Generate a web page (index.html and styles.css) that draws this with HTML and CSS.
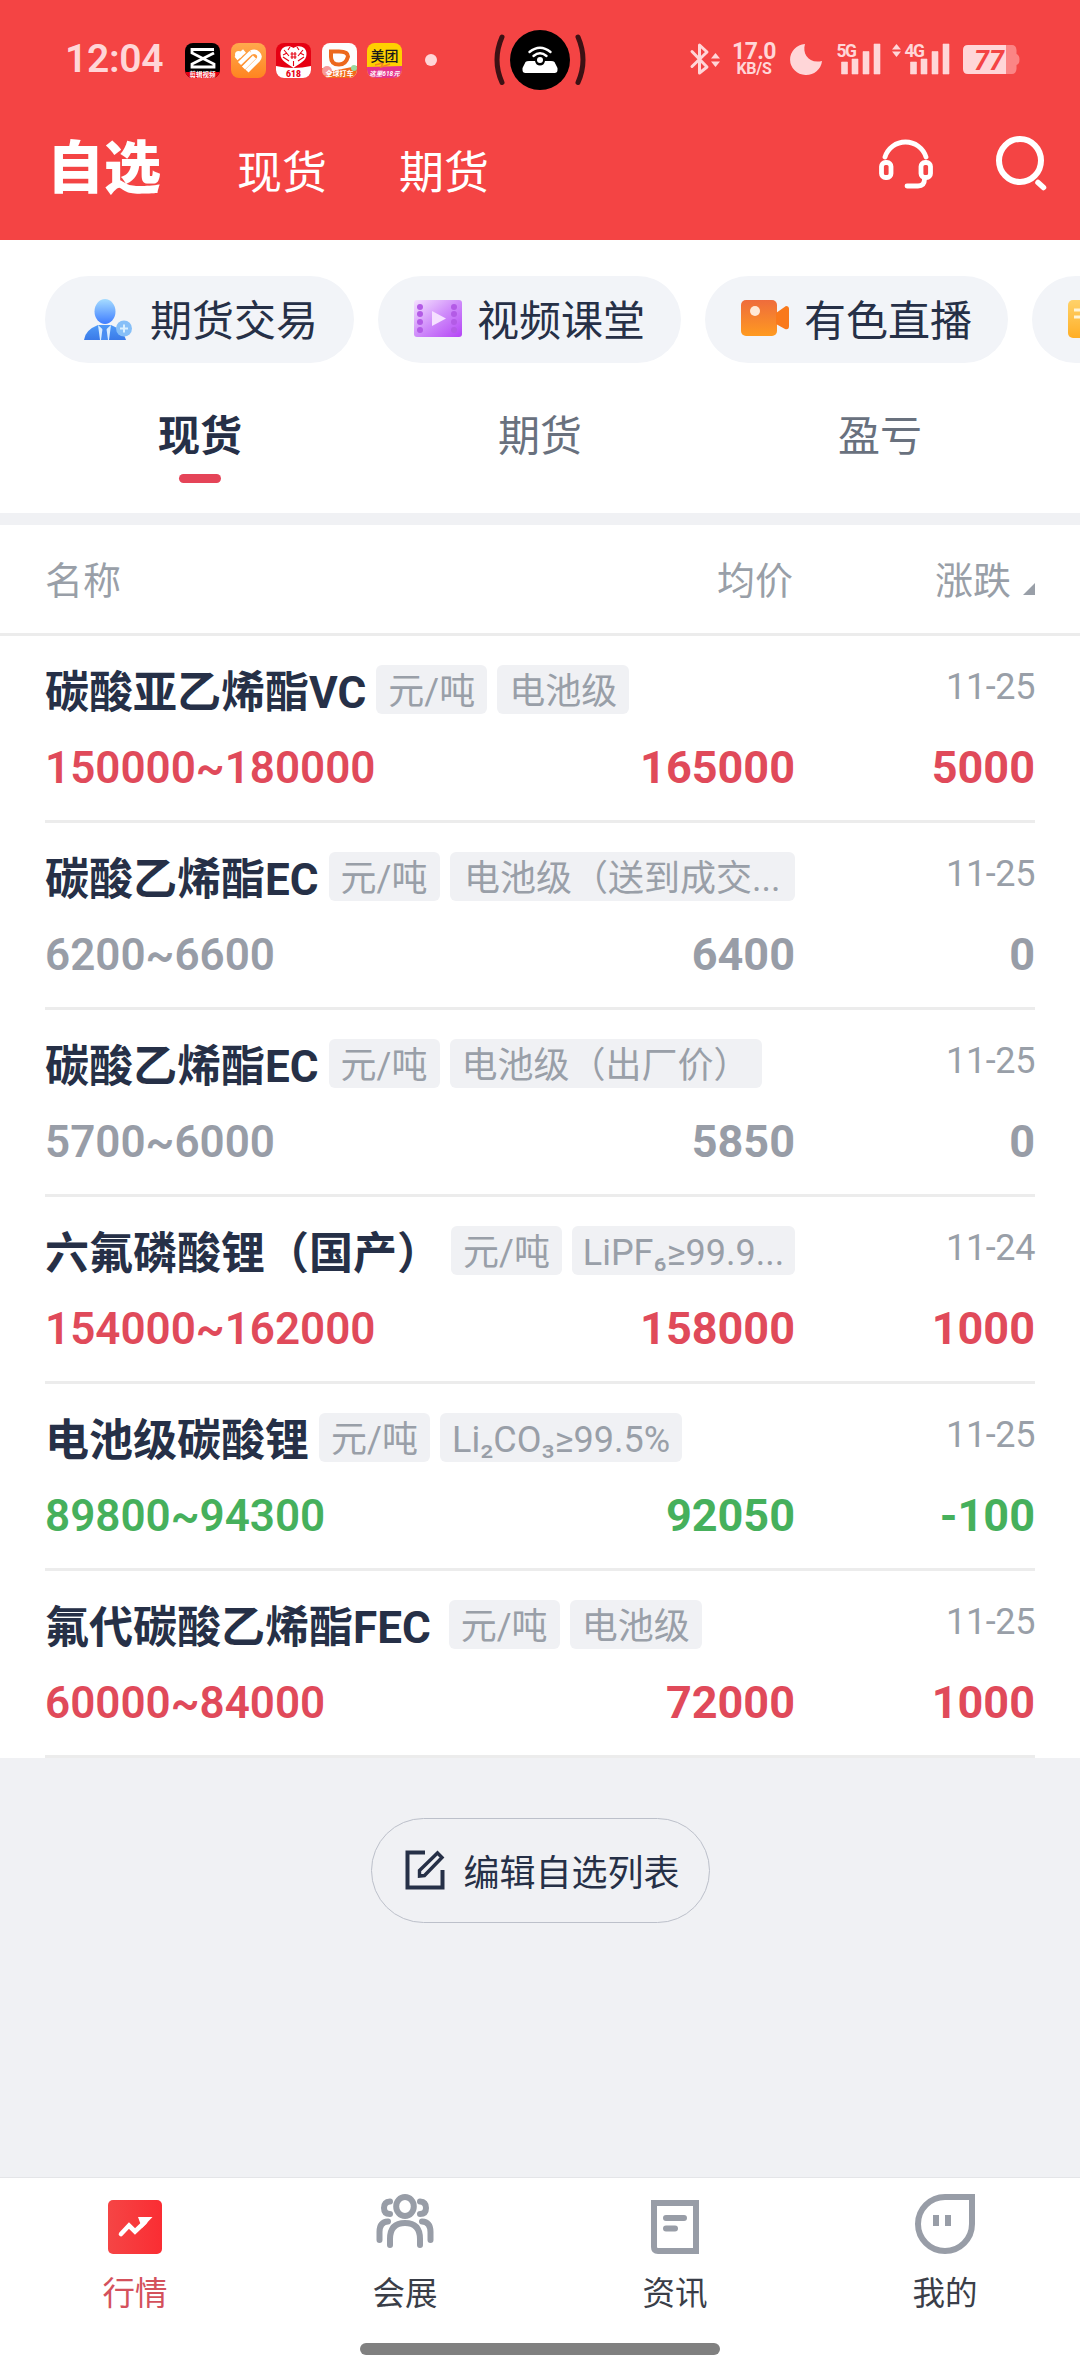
FILE: index.html
```html
<!DOCTYPE html>
<html lang="zh-CN">
<head>
<meta charset="utf-8">
<title>自选</title>
<link rel="stylesheet" href="styles.css">
</head>
<body>
<div class="app">
  <header class="header">
    <div class="status">
      <div class="status-left">
        <span class="clock">12:04</span>
        <svg class="app-icon" viewBox="0 0 35 35"><clipPath id="r"><rect width="35" height="35" rx="8"/></clipPath><g clip-path="url(#r)"><rect width="35" height="35" fill="#000"/><rect y="29" width="35" height="6" fill="#e60012"/><path d="M29 6.500H7V10L29 21V24H7V21L29 10" fill="none" stroke="#fff" stroke-width="2.800"/><text x="17.500" y="34" class="app-tag">剪辑视频</text></g></svg>
        <svg class="app-icon" viewBox="0 0 35 35"><defs><linearGradient id="o" x2="0" y2="1"><stop stop-color="#ffa94d"/><stop offset="1" stop-color="#ff8420"/></linearGradient></defs><rect width="35" height="35" rx="8" fill="url(#o)"/><g fill="none" stroke="#fff" stroke-width="4.400"><path d="M5 15.500L13.500 8M8.500 20.500L20 9.500M12.500 25L23.500 14"/><path d="M20 9.500Q24 7.500 27 10.500T27 17L16 28"/></g><circle cx="7.500" cy="11.500" r="3.500" fill="#fff"/></svg>
        <svg class="app-icon" viewBox="0 0 35 35"><g clip-path="url(#r)"><rect width="35" height="35" fill="#e60012"/><path d="M0 23Q17.500 27 35 23V35H0Z" fill="#fff"/><path d="M17.500 5C12 1 4 4 4.500 11C4.500 18 11 20 17.500 25C24 20 30.500 18 30.500 11C31 4 23 1 17.500 5Z" fill="#fff"/><path d="M8 7l5 6M27 7l-5 6M7 14l6 4M28 14l-6 4M14.500 11h6M14.500 14h6M16 9v7M19 9v7M12 7l2-3M23 7l-2-3M17.500 18v5M11 10l-4 2M24 10l4 2" stroke="#e60012" stroke-width="1.100"/><text x="17.500" y="34" class="app-618">618</text></g></svg>
        <svg class="app-icon" viewBox="0 0 35 35"><g clip-path="url(#r)"><rect width="35" height="35" fill="#fdfdfd"/><path d="M0 25L10 28L35 23V35H0Z" fill="#f26a1b"/><circle cx="5" cy="28" r="5" fill="#f69a9a"/><circle cx="32" cy="25" r="3" fill="#9bd8a0"/><path d="M9 8.500H17Q26 8.500 26 13.500Q24 21.500 17 21.500Q9 21.500 9 14Z" fill="none" stroke="#ec681c" stroke-width="4"/><text x="17.500" y="33" class="app-tag app-tag-big">全球打车</text></g></svg>
        <svg class="app-icon" viewBox="0 0 35 35"><g clip-path="url(#r)"><rect width="35" height="35" fill="#ffd000"/><path d="M0 24L35 23V35H0Z" fill="#e5348b"/><path d="M8 22L16 20L14 24L23 21" stroke="#f58220" fill="none" stroke-width="1.500"/><text x="17.500" y="17.500" class="app-mt">美团</text><text x="17.500" y="32.500" class="app-tag app-tag-mt">这里618元</text></g></svg>
        <span class="more-dot"></span>
      </div>
      <svg class="island" viewBox="490 28 100 64"><circle cx="540" cy="60" r="30" fill="#000"/><g fill="none" stroke="#3c1114" stroke-width="5" stroke-linecap="round"><path d="M502 37Q492 60 502 82.500M578 37Q588 60 578 82.500"/></g><path d="M525.500 62Q526.500 61 529 61H535Q536 65.500 540 65.500T545 61H551Q553.500 61 554.500 62L557.500 68V70Q557.500 73 554.500 73H525.500Q522.500 73 522.500 70V68Z" fill="#fff"/><circle cx="540" cy="60" r="3" fill="#fff"/><g fill="none" stroke="#fff" stroke-width="2.400" stroke-linecap="round"><path d="M529.500 52Q540 43.500 550.500 52M533.500 56Q540 50.500 546.500 56"/></g></svg>
      <div class="status-right">
        <svg width="32" height="34" viewBox="689 43 32 34"><path d="M692 51.500L707 67L699.500 73V45L707 52L692 66.500" fill="none" stroke="#ffd6d8" stroke-width="3" stroke-linejoin="round" stroke-linecap="round"/><path d="M711 58.500L715.500 53L720 58.500ZM711 61.500H720L715.500 67Z" fill="#ffd6d8"/></svg>
        <div class="net-speed"><span class="net-num">17.0</span><span class="net-unit">KB/S</span></div>
        <svg class="moon" width="34" height="34" viewBox="789 43 34 34"><path d="M805 44C802 54 809 64 822 61A16 15.500 0 1 1 805 44Z" fill="#ffd6d8"/></svg>
        <svg class="sig" width="45" height="34" viewBox="836 43 45 34"><text x="836.500" y="56.500" class="sig-label">5G</text><path d="M841.500 62h6v12h-6zM852 59h6v15h-6zM863 51.500h6V74h-6zM874 44h6v30h-6z" class="sig-bars"/></svg>
        <svg class="sig2" width="59" height="34" viewBox="891 43 59 34"><path d="M892 49.500L896.500 44L901 49.500ZM892 51.500H901L896.500 57Z" fill="#ffd6d8"/><text x="904.500" y="56.500" class="sig-label">4G</text><path d="M910.500 62h6v12h-6zM921 59h6v15h-6zM932 51.500h6V74h-6zM943 44h6v30h-6z" class="sig-bars"/></svg>
        <svg class="batt" width="58" height="34" viewBox="962 43 58 34"><path d="M1006 45h6q4 0 4.500 5v4q3 1 3 5.500t-3 5.500v4q-.5 5-4.500 5h-6z" fill="#fb8585"/><path d="M968 45H1006V74H968Q963 74 963 69V50Q963 45 968 45Z" fill="#ffd6d8"/><text x="989" y="69.500" class="batt-num">77</text></svg>
      </div>
    </div>
    <nav class="main-nav">
      <span class="main-title">自选</span>
      <span class="main-item">现货</span>
      <span class="main-item main-item-2">期货</span>
      <svg class="ico-head" width="56" height="56" viewBox="878 136 56 56"><g fill="none" stroke="#fff" stroke-width="4.800" stroke-linecap="round"><path d="M885 157A21.500 21.500 0 0 1 926 157"/><rect x="881.500" y="162.500" width="9.500" height="15" rx="4"/><rect x="921" y="162.500" width="9.500" height="15" rx="4"/><path d="M924.500 179Q924.500 186 918 186H907"/></g></svg>
      <svg class="ico-search" width="54" height="58" viewBox="994 134 54 58"><g fill="none" stroke="#fff" stroke-linecap="round"><ellipse cx="1020" cy="160.500" rx="21" ry="21.500" stroke-width="6"/><path d="M1038 182.500L1043.500 187.500" stroke-width="5.500"/></g></svg>
    </nav>
  </header>

  <section class="chips">
    <div class="chip"><svg width="54" height="48" viewBox="81 297 54 48"><defs><linearGradient id="b" x2="0" y2="1"><stop stop-color="#a6dcff"/><stop offset="1" stop-color="#3f7dff"/></linearGradient><linearGradient id="b2" x2="0" y2="1"><stop stop-color="#4f9af8"/><stop offset="1" stop-color="#3a7ae8"/></linearGradient></defs><path d="M84 341Q85 331 98 326H111Q124 331 126 341Z" fill="url(#b2)"/><path d="M98 326L104.500 332L111 326L109 341H100Z" fill="#d7ecff"/><path d="M102.500 330h4l1.500 11h-7z" fill="#4a8ef2"/><ellipse cx="105" cy="312.500" rx="10.500" ry="12.500" fill="url(#b)"/><circle cx="124" cy="329.500" r="8" fill="#86bff8"/><path d="M120 329.500h8M124 325.500v8" stroke="#d9efff" stroke-width="2"/></svg><span>期货交易</span></div>
    <div class="chip"><svg width="48" height="48" viewBox="414 297 48 48"><defs><linearGradient id="p" x2="1" y2="1"><stop stop-color="#f5e2ff"/><stop offset=".5" stop-color="#cf8cfa"/><stop offset="1" stop-color="#b444f5"/></linearGradient></defs><rect x="414" y="301" width="48" height="37" rx="3" fill="url(#p)"/><g fill="#b35be6"><circle cx="420" cy="308" r="3"/><circle cx="420" cy="315" r="3"/><circle cx="420" cy="323" r="3"/><circle cx="420" cy="331" r="3"/><circle cx="454" cy="308" r="3"/><circle cx="454" cy="315" r="3"/><circle cx="454" cy="323" r="3"/><circle cx="454" cy="331" r="3"/></g><path d="M432 312L446 319.500L432 327Z" fill="#f5e0ff"/></svg><span>视频课堂</span></div>
    <div class="chip"><svg width="48" height="48" viewBox="741 297 48 48"><defs><linearGradient id="c" x2="0" y2="1"><stop stop-color="#ee6c3c"/><stop offset="1" stop-color="#ff9a20"/></linearGradient></defs><rect x="741" y="301" width="36" height="36" rx="5" fill="url(#c)"/><path d="M776 314L786 307Q789 307 789 310V327Q789 331 785 330L776 325Z" fill="#f9791c"/><circle cx="755" cy="312" r="5" fill="#ffe9d6"/></svg><span>有色直播</span></div>
    <div class="chip"><svg width="48" height="48" viewBox="1068 297 48 48"><defs><linearGradient id="d" x2="0" y2="1"><stop stop-color="#ffd26a"/><stop offset="1" stop-color="#ffae26"/></linearGradient></defs><rect x="1068" y="301" width="40" height="38" rx="5" fill="url(#d)"/><path d="M1074 311h24M1074 318h24" stroke="#fff4d6" stroke-width="3"/></svg></div>
  </section>

  <section class="tabs">
    <div class="tab tab-on"><span>现货</span></div><div class="tab"><span>期货</span></div><div class="tab"><span>盈亏</span></div>
  </section>

  <section class="thead"><span class="col-name">名称</span><span class="col-avg">均价</span><span class="col-chg">涨跌</span><i class="sort"></i></section>

  <main class="list">
    <article class="row up"><div class="line1"><div class="what"><h3>碳酸亚乙烯酯VC</h3><span class="tag unit">元/吨</span><span class="tag">电池级</span></div><time>11-25</time></div><div class="line2"><span class="range">150000~180000</span><span class="avg">165000</span><span class="chg">5000</span></div></article>
    <article class="row flat"><div class="line1"><div class="what"><h3>碳酸乙烯酯EC</h3><span class="tag unit">元/吨</span><span class="tag cut">电池级（送到成交...</span></div><time>11-25</time></div><div class="line2"><span class="range">6200~6600</span><span class="avg">6400</span><span class="chg">0</span></div></article>
    <article class="row flat"><div class="line1"><div class="what"><h3>碳酸乙烯酯EC</h3><span class="tag unit">元/吨</span><span class="tag">电池级（出厂价）</span></div><time>11-25</time></div><div class="line2"><span class="range">5700~6000</span><span class="avg">5850</span><span class="chg">0</span></div></article>
    <article class="row up"><div class="line1"><div class="what"><h3>六氟磷酸锂（国产）</h3><span class="tag unit">元/吨</span><span class="tag cut">LiPF₆≥99.9...</span></div><time>11-24</time></div><div class="line2"><span class="range">154000~162000</span><span class="avg">158000</span><span class="chg">1000</span></div></article>
    <article class="row down"><div class="line1"><div class="what"><h3>电池级碳酸锂</h3><span class="tag unit">元/吨</span><span class="tag">Li₂CO₃≥99.5%</span></div><time>11-25</time></div><div class="line2"><span class="range">89800~94300</span><span class="avg">92050</span><span class="chg">-100</span></div></article>
    <article class="row up"><div class="line1"><div class="what"><h3 class="wide">氟代碳酸乙烯酯FEC</h3><span class="tag unit">元/吨</span><span class="tag">电池级</span></div><time>11-25</time></div><div class="line2"><span class="range">60000~84000</span><span class="avg">72000</span><span class="chg">1000</span></div></article>
  </main>

  <section class="tail">
    <button class="edit"><svg width="40" height="40" viewBox="404 1850 40 40"><g fill="none" stroke="#263047" stroke-width="4"><path d="M424 1852.500H406.500V1887.500H441.500V1870"/><path d="M418.500 1876V1870.500L436.500 1853L441 1857.500L423.500 1875.500Z" stroke-width="3.400"/></g></svg><span>编辑自选列表</span></button>
  </section>

  <footer class="tabbar">
    <div class="tb-row">
      <div class="tb on"><svg width="60" height="60" viewBox="105 2194 60 60"><defs><linearGradient id="n" x2="1"><stop stop-color="#f54545"/><stop offset="1" stop-color="#fa2d33"/></linearGradient></defs><rect x="108" y="2200" width="54" height="54" rx="5" fill="url(#n)"/><path d="M121 2234L129 2225.500L135 2231.500L145 2222" fill="none" stroke="#fff" stroke-width="4.600" stroke-linecap="round"/><path d="M138 2217H152.500L142 2228Z" fill="#fff"/></svg><span>行情</span></div>
      <div class="tb"><svg width="60" height="60" viewBox="375 2194 60 60"><g fill="none" stroke="#989da7" stroke-width="6" stroke-linecap="round"><ellipse cx="405" cy="2206.500" rx="8.800" ry="9.500"/><path d="M390 2245V2239Q390 2223 405 2223T420 2239V2245M390 2201.500Q384 2202 384 2208T390 2214M420 2201.500Q426 2202 426 2208T420 2214M388 2221.500Q379.500 2222 379.500 2232V2240M422 2221.500Q430.500 2222 430.500 2232V2240"/></g></svg><span>会展</span></div>
      <div class="tb"><svg width="60" height="60" viewBox="645 2194 60 60"><path d="M654 2203H696V2251H658Q654 2251 654 2247Z" fill="none" stroke="#989da7" stroke-width="6"/><path d="M666 2218H684M666 2228.500H675" stroke="#989da7" stroke-width="6" stroke-linecap="round"/></svg><span>资讯</span></div>
      <div class="tb"><svg width="60" height="60" viewBox="915 2194 60 60"><path d="M945 2197H972V2224A27 27 0 1 1 945 2197Z" fill="none" stroke="#989da7" stroke-width="6"/><path d="M933 2215h6v11h-6zM945 2215h6v11h-6z" fill="#989da7"/></svg><span>我的</span></div>
    </div>
    <div class="home"></div>
  </footer>
</div>
</body>
</html>
```

FILE: styles.css
```css
* { box-sizing: border-box; }
body { margin: 0; font-family: Roboto, "Noto Sans CJK SC", sans-serif; color: #263047; background: #f0f1f4; }
svg { display: block; flex: none; overflow: visible; }
.app { width: 1080px; height: 2376px; display: flex; flex-direction: column; overflow: hidden; }

.header { height: 240px; background: #f44444; flex: none; }
.status { height: 120px; display: grid; grid-template-columns: 490px 100px 490px; align-items: center; }
.status-left { display: flex; align-items: center; padding-left: 65px; }
.clock { width: 120px; font-size: 39px; font-weight: 600; color: #ffd6d8; letter-spacing: -.3px; line-height: 40px; margin-top: -2px; }
.app-icon { width: 35px; height: 35px; margin-right: 10.500px; }
.app-tag { font-size: 6.500px; fill: #fff; font-weight: 700; text-anchor: middle; }
.app-tag-big { font-size: 7px; }
.app-tag-mt { font-size: 6.500px; font-style: italic; }
.app-618 { font-size: 8.500px; fill: #e60012; font-weight: 900; text-anchor: middle; }
.app-mt { font-size: 14px; fill: #1a1a1a; font-weight: 500; text-anchor: middle; }
.more-dot { width: 12px; height: 12px; border-radius: 50%; background: #ffd6d8; margin-left: 12px; }
.island { width: 100px; height: 64px; }
.status-right { display: flex; align-items: center; padding-left: 99px; color: #ffd6d8; }
.net-speed { width: 48px; margin-left: 9px; text-align: center; display: flex; flex-direction: column; font-weight: 700; white-space: nowrap; }
.net-num { font-size: 23px; line-height: 18px; letter-spacing: -.6px; }
.net-unit { font-size: 16px; line-height: 16px; font-weight: 700; letter-spacing: -.3px; }
.moon { margin-left: 11px; }
.sig { margin-left: 13px; }
.sig2 { margin-left: 10px; }
.batt { margin-left: 12px; }
.sig-label { font-size: 17.500px; font-weight: 700; fill: #ffd6d8; letter-spacing: -1.500px; }
.sig-bars { fill: #ffd6d8; stroke: #ffd6d8; stroke-width: .6; }
.batt-num { font-size: 27px; font-weight: 700; font-style: italic; fill: #f44444; text-anchor: middle; }

.main-nav { height: 120px; display: flex; align-items: center; padding-left: 47px; color: #fff; }
.main-title { width: 190px; font-size: 57px; font-weight: 900; line-height: 60px; margin-top: -23px; }
.main-item { width: 162px; font-size: 45px; line-height: 60px; margin-top: -12px; }
.main-item-2 { width: 479px; }
.ico-head { margin-top: -32px; }
.ico-search { margin-left: 60px; margin-top: -34px; }

.chips { display: flex; flex: none; gap: 24px; height: 159px; padding: 36px 0 36px 45px; background: #fff; overflow: hidden; }
.chip { flex: none; height: 87px; padding: 0 36px; border-radius: 44px; background: #f2f4f8; display: flex; align-items: center; gap: 15px; font-size: 42px; }
.chip span { line-height: 60px; margin-top: 5px; }

.tabs { display: flex; flex: none; height: 114px; padding: 0 30px; background: #fff; }
.tab { flex: 1; display: flex; flex-direction: column; align-items: center; padding-top: 8px; font-size: 42px; line-height: 60px; color: #69717e; }
.tab-on { font-weight: 700; color: #263047; }
.tab-on::after { content: ""; width: 42px; height: 9px; border-radius: 5px; background: #e54458; margin-top: 7px; }

.thead { flex: none; height: 123px; border-top: 12px solid #f0f1f4; border-bottom: 3px solid #ececec; background: #fff; display: flex; align-items: center; padding: 4px 45px 0; font-size: 38px; color: #999fa8; }
.col-name { flex: 1; }
.col-avg { width: 218px; }
.col-chg { width: 88px; }
.col-name, .col-avg, .col-chg { line-height: 56px; }
.sort { width: 12px; height: 12px; background: #999fa8; clip-path: polygon(100% 0, 100% 100%, 0 100%); margin-top: 16px; }

.list { flex: none; background: #fff; }
.row { height: 187px; margin: 0 45px; border-bottom: 3px solid #ececec; }
.line1 { display: flex; justify-content: space-between; padding-top: 29px; height: 100px; }
.what { display: flex; width: 750px; }
.what h3 { margin: 0 10px 0 0; font-size: 44px; font-weight: 700; line-height: 56px; height: 49px; white-space: nowrap; color: #263047; }
.what .wide { margin-right: 18px; }
.tag { height: 49px; line-height: 54px; padding: 0 12px; margin-right: 10px; border-radius: 6px; background: #f0f1f4; font-size: 36px; color: #999fa8; white-space: nowrap; }
.unit { width: 111px; text-align: center; flex: none; }
.cut { flex: 1; margin-right: 0; text-align: center; padding: 0; }
time { font-size: 36px; line-height: 44px; letter-spacing: -.4px; color: #999fa8; }
.line2 { display: flex; align-items: baseline; line-height: 64px; font-size: 45px; font-weight: 700; }
.range { flex: 1; font-size: 44px; font-weight: 600; }
.avg { width: 300px; text-align: right; }
.chg { width: 240px; text-align: right; }
.up { color: #e04a5a; }
.flat { color: #989da7; }
.down { color: #46b05c; }

.tail { flex: 1; display: flex; justify-content: center; align-items: flex-start; padding-top: 60px; }
.edit { width: 339px; height: 105px; padding: 0 0 0 33px; border: 1px solid #bcc0ca; border-radius: 53px; background: none; display: flex; align-items: center; gap: 19px; font: inherit; font-size: 36px; color: #263047; }
.edit span { line-height: 50px; margin-top: 6px; }
.edit svg { margin-top: -1px; }

.tabbar { flex: none; height: 199px; background: #fff; border-top: 1px solid #e4e5e8; }
.tb-row { display: flex; padding-top: 16px; height: 165px; }
.tb { flex: 1; display: flex; flex-direction: column; align-items: center; font-size: 32.500px; color: #3a3e48; }
.tb span { line-height: 44px; margin-top: 18px; }
.on { color: #d4515c; }
.home { width: 360px; height: 12px; border-radius: 6px; background: #808080; margin: 0 auto; }
```
